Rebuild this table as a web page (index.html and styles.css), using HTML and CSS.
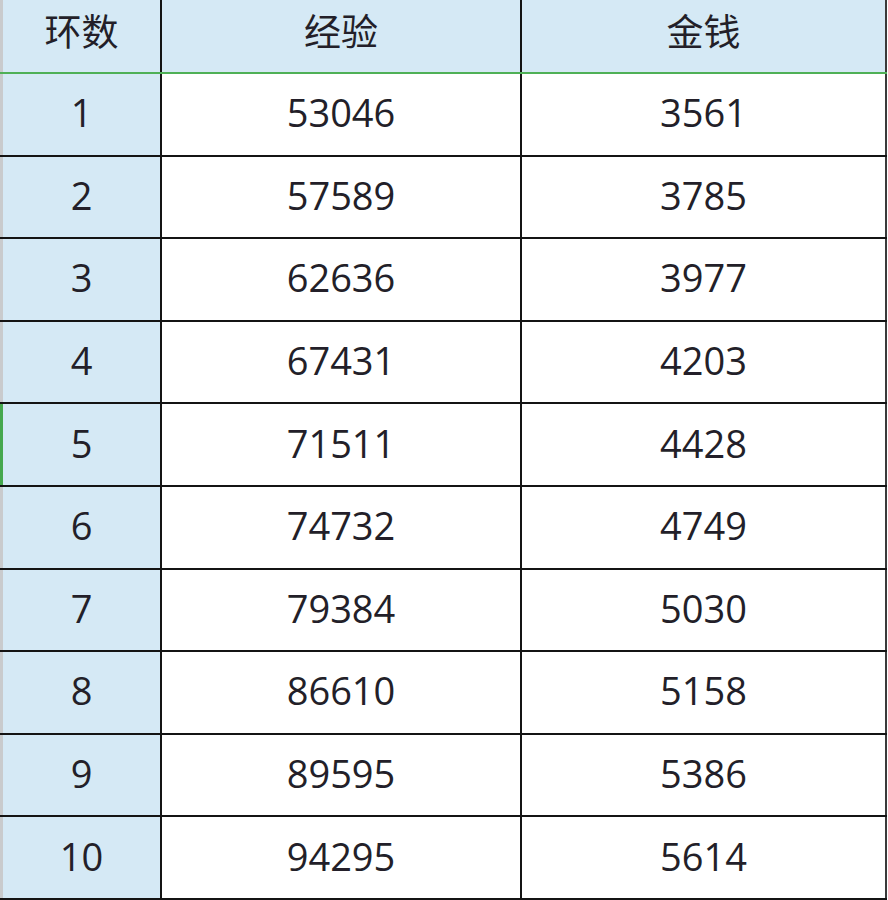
FILE: index.html
```html
<!DOCTYPE html>
<html lang="zh-CN">
<head>
<meta charset="utf-8">
<title>环数 经验 金钱</title>
<link rel="stylesheet" href="styles.css">
</head>
<body>
<div class="sheet">
  <div class="row head">
    <div class="cell key">环数</div>
    <div class="cell">经验</div>
    <div class="cell">金钱</div>
  </div>
  <div class="row"><div class="cell key">1</div><div class="cell">53046</div><div class="cell">3561</div></div>
  <div class="row"><div class="cell key">2</div><div class="cell">57589</div><div class="cell">3785</div></div>
  <div class="row"><div class="cell key">3</div><div class="cell">62636</div><div class="cell">3977</div></div>
  <div class="row"><div class="cell key">4</div><div class="cell">67431</div><div class="cell">4203</div></div>
  <div class="row selected"><div class="cell key">5</div><div class="cell">71511</div><div class="cell">4428</div></div>
  <div class="row"><div class="cell key">6</div><div class="cell">74732</div><div class="cell">4749</div></div>
  <div class="row"><div class="cell key">7</div><div class="cell">79384</div><div class="cell">5030</div></div>
  <div class="row"><div class="cell key">8</div><div class="cell">86610</div><div class="cell">5158</div></div>
  <div class="row"><div class="cell key">9</div><div class="cell">89595</div><div class="cell">5386</div></div>
  <div class="row"><div class="cell key">10</div><div class="cell">94295</div><div class="cell">5614</div></div>
</div>
</body>
</html>
```
FILE: styles.css
```css
html, body {
  margin: 0;
  padding: 0;
  background: #ffffff;
}
.sheet {
  width: 887px;
  display: flex;
  flex-direction: column;
  font-family: "Open Sans", "Noto Sans CJK SC", sans-serif;
  color: #231f29;
}
.row {
  display: grid;
  grid-template-columns: 162px 360px 365px;
  height: 82.6px;
  box-sizing: border-box;
  border-bottom: 2px solid #141414;
}
.row.head {
  height: 74px;
  border-bottom: 2px solid #4fb056;
  background: #d5e9f5;
}
.cell {
  display: flex;
  align-items: center;
  justify-content: center;
  box-sizing: border-box;
  border-right: 2px solid #141414;
  font-size: 38px;
  padding-bottom: 4px;
}
.cell:last-child {
  border-right-color: #3a3a3a;
}
.cell.key {
  background: #d5e9f5;
  border-left: 3px solid #c9cbcd;
}
.row.selected .cell.key {
  border-left-color: #46a84e;
}
.head .cell {
  font-family: "Noto Sans CJK SC", sans-serif;
  font-size: 37px;
  padding-bottom: 12px;
}
```
